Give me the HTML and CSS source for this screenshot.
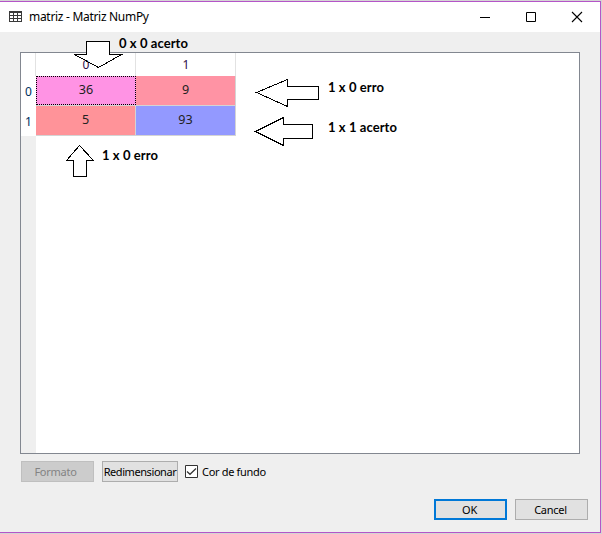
FILE: index.html
```
<!DOCTYPE html>
<html lang="pt">
<head>
<meta charset="utf-8">
<title>matriz - Matriz NumPy</title>
<link rel="stylesheet" href="styles.css">
</head>
<body>
<div class="window">
  <header class="titlebar">
    <svg class="app-icon" width="13" height="11" viewBox="0 0 13 11" shape-rendering="crispEdges"><path d="M.5.5h12v10H.5zM0 1.5h13M0 4.5h13M0 7.5h13M4.5 0v11M8.5 0v11" fill="none" stroke="#3a3a3a"/></svg>
    <h1 class="title">matriz - Matriz NumPy</h1>
    <div class="controls">
      <svg width="12" height="12" viewBox="0 0 12 12"><path d="M1 6.5h10" stroke="#000" fill="none"/></svg>
      <svg width="12" height="12" viewBox="0 0 12 12"><path d="M1.500 1.500h9v9h-9z" stroke="#000" fill="none"/></svg>
      <svg width="12" height="12" viewBox="0 0 12 12"><path d="M1 1l10 10M11 1L1 11" stroke="#000" stroke-width="1.1" fill="none"/></svg>
    </div>
  </header>
  <main class="view">
    <div class="row-heads"><div class="rh">0</div><div class="rh">1</div></div>
    <div class="grid">
      <div class="ch">0</div><div class="ch">1</div>
      <div class="cell current">36</div><div class="cell rose">9</div>
      <div class="cell red">5</div><div class="cell blue">93</div>
    </div>
  </main>
  <div class="tools">
    <button class="btn disabled">Formato</button>
    <button class="btn resize">Redimensionar</button>
    <label class="check"><svg width="13" height="13" viewBox="0 0 13 13"><path d="M.5.5h12v12H.5z" fill="#fff" stroke="#333"/><path d="M2 6.500l3 2.800 6-5.800" fill="none" stroke="#333" stroke-width="1.2"/></svg><span>Cor de fundo</span></label>
  </div>
  <footer class="actions"><button class="btn ok">OK</button><button class="btn">Cancel</button></footer>
</div>
<svg class="arrows" width="602" height="534" viewBox="0 0 602 534" shape-rendering="crispEdges">
  <path class="stem" d="M87 42h22v14H87z"/>
  <path d="M86.500 54.500V41.500H109.500V54.500H121.500L98.500 67.500L74.500 54.500Z"/>
  <path d="M287.500 86.500H318.500V99.500H287.500V106.500L256.500 92.500L287.500 79.500Z"/>
  <path d="M283.500 124.500H312.500V138.500H283.500V145.500L255.500 131.500L283.500 117.500Z"/>
  <path d="M73.500 160.500V176.500H86.500V160.500H93.500L79.500 145.500L66.500 160.500Z"/>
</svg>
<div class="note n1">0 x 0 acerto</div>
<div class="note n2">1 x 0 erro</div>
<div class="note n3">1 x 1 acerto</div>
<div class="note n4">1 x 0 erro</div>
</body>
</html>
```
FILE: styles.css
```
* { box-sizing: border-box; }
html { background: #d4d4d4; }
body { margin: 0; padding-top: 1px; width: 602px; height: 534px; overflow: hidden; position: relative; font-family: "Noto Sans", sans-serif; color: #000; }
.window { width: 601px; height: 532px; border: 1px solid #b455c8; border-left: 0; background: #efefef; display: flex; flex-direction: column; }
.titlebar { height: 30px; background: #fff; display: flex; align-items: center; padding: 0 17px 0 9px; flex: none; }
.title { margin: 0 0 0 7px; font-size: 12px; font-weight: 400; line-height: 16px; letter-spacing: -.3px; white-space: nowrap; }
.controls { margin-left: auto; display: flex; gap: 34px; }
.controls svg, .app-icon, .check svg { display: block; }
.app-icon { margin-top: -2px; }
.view { margin: 20px 0 0 20px; width: 560px; height: 402px; border: 1px solid #828790; background: #fff; display: flex; flex: none; }
.row-heads { width: 15px; background: #efefef; }
.rh { height: 30px; background: #fff; font-size: 12px; line-height: 32px; text-align: center; color: #003060; }
.rh:first-child { height: 53px; padding-top: 23px; }
.grid { display: grid; grid-template-columns: 100px 100px; grid-template-rows: 23px 30px 30px; width: 200px; height: 83px; font-size: 12px; text-align: center; }
.ch { border-right: 1px solid #e2e2e2; box-shadow: -1px 0 #e2e2e2; line-height: 24px; padding-left: 1px; color: #30104a; }
.cell { border-right: 1px solid #d4d4d4; border-bottom: 1px solid #d4d4d4; font-size: 12.6px; line-height: 27px; color: #222; }
.current { background: #ff93e4; height: 29px; border: 1px dotted #000; line-height: 25px; }
.rose { background: #ff93a4; }
.red { background: #ff9399; }
.blue { background: #9399ff; }
.grid .current { box-shadow: 0 1px #d4d4d4; }
.tools { margin: 7px 0 0 21px; display: flex; height: 21px; flex: none; }
.btn { width: 73px; height: 21px; padding: 0 2px 0 0; border: 1px solid #adadad; border-radius: 0; background: #e1e1e1; font: 11px/18px "Noto Sans", sans-serif; letter-spacing: -.25px; color: #000; white-space: nowrap; }
.disabled { background: #ccc; border-color: #bfbfbf; color: #838383; padding-right: 4px; }
.resize { width: 76px; margin-left: 8px; letter-spacing: -.42px; padding: 0; }
.check { display: flex; align-items: center; gap: 4px; margin-left: 7px; font-size: 11px; line-height: 20px; letter-spacing: -.32px; white-space: nowrap; }
.actions { display: flex; justify-content: flex-end; gap: 8px; margin: 17px 12px 0 0; }
.ok { border: 2px solid #0078d7; line-height: 16px; }
.arrows { position: absolute; left: 0; top: 0; fill: none; stroke: #000; }
.stem { fill: #fff; stroke: none; }
.note { position: absolute; font: 700 13px/16px Lato, sans-serif; letter-spacing: .07px; white-space: nowrap; }
.n1 { left: 119px; top: 35px; }
.n2 { left: 328px; top: 79px; }
.n3 { left: 328px; top: 119px; }
.n4 { left: 102px; top: 147px; }
```
